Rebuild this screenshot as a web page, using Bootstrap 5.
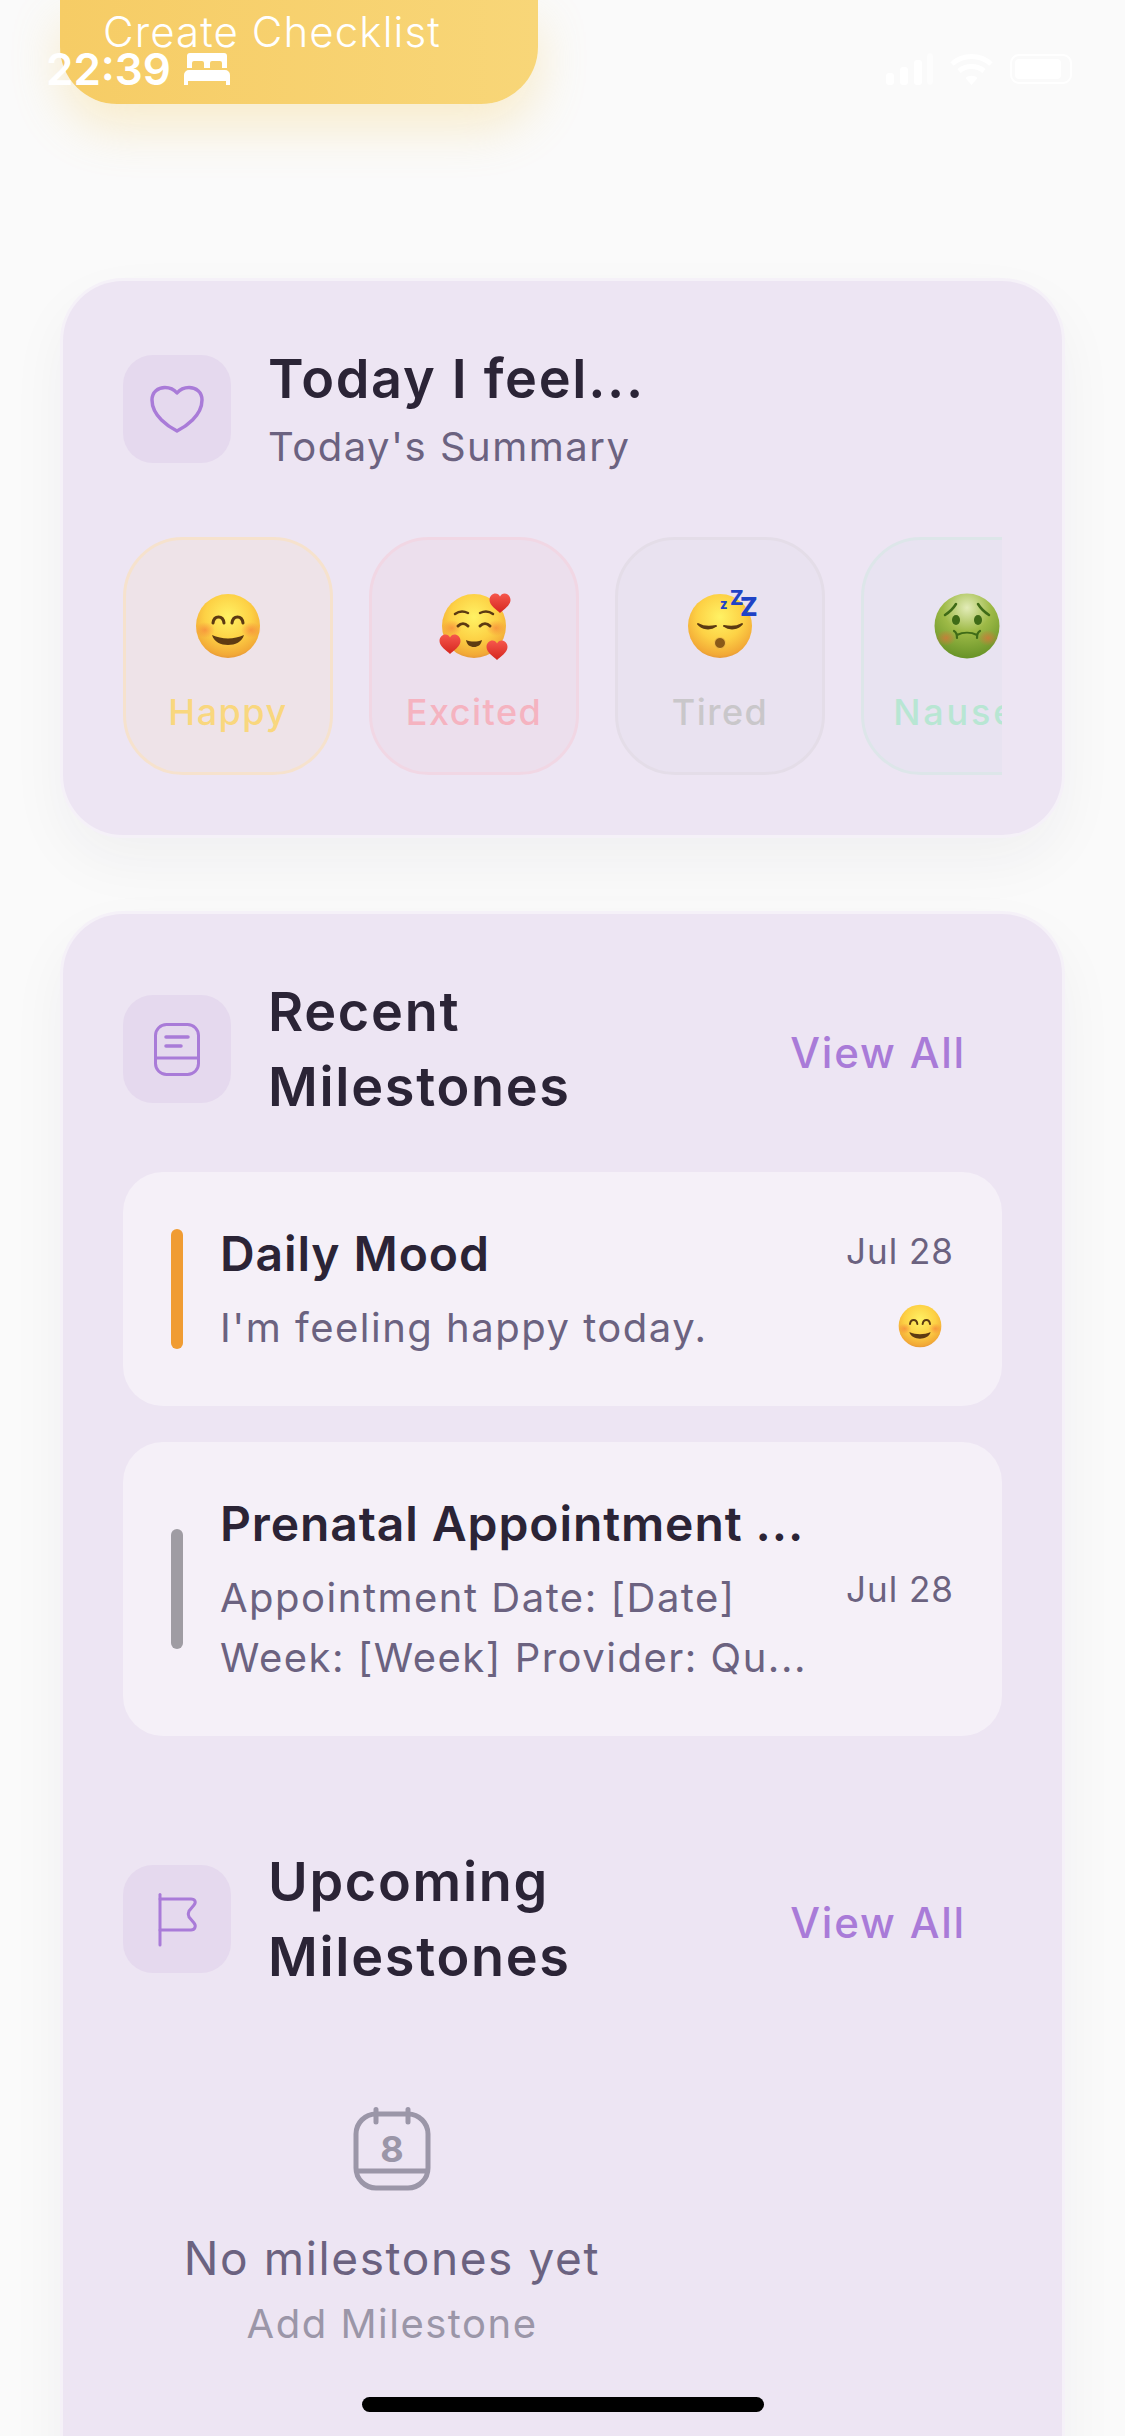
<!DOCTYPE html>
<html lang="en">
<head>
    <meta charset="UTF-8">
    <meta name="viewport" content="width=device-width, initial-scale=1.0">
    <title>Milestones</title>
    <link href="https://cdn.jsdelivr.net/npm/bootstrap@5.3.0/dist/css/bootstrap.min.css" rel="stylesheet">
    <script src="https://cdn.jsdelivr.net/npm/bootstrap@5.3.0/dist/js/bootstrap.bundle.min.js"></script>

    <style>
        body {
            width: 1125px;
            height: 2436px;
            overflow: hidden;
            position: relative;
            background: #fafafa;
            font-family: "Inter", "Liberation Sans", sans-serif;
            color: #2b2436;
        }

        /* Status bar and home bar sit over the page */
        .status-strip {
            position: absolute;
            top: 53px;
            left: 46px;
            right: 50px;
            height: 32px;
            color: #fff;
            z-index: 5;
        }
        .status-time {
            font-size: 44px;
            line-height: 32px;
            font-weight: 600;
        }
        .bed-icon {
            margin-left: 13px;
        }
        .home-line {
            position: absolute;
            left: 362px;
            top: 2397px;
            width: 402px;
            height: 15px;
            border-radius: 8px;
            background: #000;
            z-index: 5;
        }

        /* Yellow button scrolled under the status bar */
        .checklist-btn {
            width: 478px;
            height: 104px;
            margin-left: 60px;
            padding: 0 0 42px 43px;
            display: flex;
            align-items: center;
            border-radius: 0 0 57px 57px;
            background: linear-gradient(90deg, #f6cc65, #f8d678);
            box-shadow: 0 24px 48px rgba(246, 204, 101, .3);
            color: #fff;
            font-size: 42px;
            font-weight: 300;
            letter-spacing: 1.1px;
        }

        .page-wrap {
            padding: 177px 63px 0;
        }
        .lilac-panel {
            --bs-card-bg: #ede5f3;
            --bs-card-border-radius: 60px;
            --bs-card-inner-border-radius: 60px;
            border-width: 0;
            box-shadow: 0 0 0 3px #f5f1f8, 0 24px 60px rgba(40, 40, 50, .05);
            padding: 60px;
        }
        .lilac-panel + .lilac-panel {
            margin-top: 79px;
            padding-bottom: 200px;
        }
        .icon-tile {
            width: 108px;
            height: 108px;
            border-radius: 30px;
            background: #e5d9ee;
            margin-right: 37px;
        }
        .panel-title {
            margin: 0;
            font-size: 54px;
            line-height: 75px;
            font-weight: 600;
            letter-spacing: 1.7px;
            color: #2b2436;
        }
        .panel-sub {
            font-size: 40px;
            line-height: 61px;
            letter-spacing: 1.5px;
            color: #6b6280;
        }
        .title-wrap {
            max-width: 400px;
        }
        .view-all {
            margin-right: 36px;
            margin-top: 6px;
            font-size: 42px;
            font-weight: 500;
            letter-spacing: 1.8px;
            color: #a97bd8;
            text-decoration: none;
        }

        /* Mood tiles */
        .mood-row {
            margin-top: 60px;
            gap: 36px;
            overflow: hidden;
        }
        .mood-tile {
            flex: 0 0 210px;
            height: 238px;
            padding-top: 53px;
            border: 3px solid;
            border-radius: 60px;
        }
        .mood-label {
            margin-top: 29px;
            font-size: 36px;
            line-height: 48px;
            font-weight: 500;
            letter-spacing: 1.5px;
            white-space: nowrap;
        }
        .mood-happy { background: #eee3e8; border-color: #f6e2cd; color: #f9d77e; }
        .mood-excited { background: #ecdfed; border-color: #f1d7e4; color: #f5b3c0; }
        .mood-tired { background: #e9e2f0; border-color: #e4dde8; color: #c9c7ca; }
        .mood-nausea { flex-basis: 212px; background: #e8e3f1; border-color: #dde6e9; color: #b8e6d3; }
        .mood-nausea .mood-label { letter-spacing: 2.8px; }
        .face-pic {
            width: 66px;
            height: 66px;
            overflow: visible;
        }

        /* Milestone rows */
        .log-list {
            margin-top: 48px;
            gap: 36px;
        }
        .log-row {
            padding: 48px;
            border-radius: 40px;
            background: #f5f0f8;
        }
        .log-bar {
            width: 12px;
            height: 120px;
            margin-right: 37px;
            border-radius: 6px;
        }
        .log-text {
            flex: 1 1 0;
            min-width: 0;
            margin-right: 42px;
            white-space: nowrap;
        }
        .log-title {
            font-size: 48px;
            line-height: 68px;
            font-weight: 600;
            letter-spacing: .9px;
            margin-bottom: 10px;
        }
        .log-body {
            font-size: 40px;
            line-height: 60px;
            letter-spacing: 1.5px;
            color: #6b6280;
        }
        .log-date {
            font-size: 35px;
            line-height: 48px;
            letter-spacing: 1px;
            color: #6b6280;
            white-space: nowrap;
        }
        .log-face {
            width: 44px;
            height: 44px;
            margin: 29px 12px 4px 0;
        }
        .upcoming-head {
            margin-top: 108px;
        }

        /* Empty state */
        .empty-box {
            width: 538px;
            margin-top: 113px;
        }
        .empty-main {
            margin-top: 37px;
            font-size: 46px;
            line-height: 60px;
            letter-spacing: 1.6px;
            color: #6b6280;
        }
        .empty-add {
            margin-top: 8px;
            font-size: 40px;
            line-height: 56px;
            letter-spacing: 1.5px;
            color: #9b96a8;
        }
    </style>
</head>
<body>

    <div class="status-strip d-flex align-items-center">
        <span class="status-time">22:39</span>
        <svg class="bed-icon" width="46" height="32" viewBox="0 0 46 32" fill="#fff">
            <path d="M6 0h34a3 3 0 0 1 3 3v12h-5V10a2 2 0 0 0-2-2h-8a2 2 0 0 0-2 2v5h-6v-5a2 2 0 0 0-2-2h-8a2 2 0 0 0-2 2v5H3V3a3 3 0 0 1 3-3z"/>
            <path d="M5 17h36a5 5 0 0 1 5 5v10h-4v-4H4v4H0V22a5 5 0 0 1 5-5z"/>
        </svg>
        <div class="ms-auto d-flex align-items-center gap-3">
            <svg width="48" height="32" viewBox="0 0 48 32" fill="#fff">
                <rect x="1" y="20" width="8" height="12" rx="3"/>
                <rect x="15" y="14" width="8" height="18" rx="3"/>
                <rect x="29" y="7" width="8" height="25" rx="3"/>
                <rect x="42" y="0" width="6" height="32" rx="3" fill-opacity=".5"/>
            </svg>
            <svg width="45" height="32" viewBox="0 0 45 32" fill="none" stroke="#fff" stroke-width="5">
                <path d="M3 11c11-10 28-10 39 0M10 18c7-6 18-6 25 0"/>
                <path d="M22.500 32l-6-7c3-3 9-3 12 0z" fill="#fff" stroke="none"/>
            </svg>
            <svg width="65" height="32" viewBox="0 0 65 32" fill="#fff">
                <rect x="1" y="2" width="60" height="28" rx="8" fill="none" stroke="#fff" stroke-width="2"/>
                <rect x="5" y="6" width="46" height="20" rx="4"/>
            </svg>
        </div>
    </div>

    <div class="checklist-btn">Create Checklist</div>

    <div class="page-wrap">

        <section class="card lilac-panel">
            <div class="d-flex align-items-center">
                <div class="icon-tile d-flex align-items-center justify-content-center flex-shrink-0">
                    <svg width="60" height="60" viewBox="0 0 60 60" fill="none" stroke="#a97bd8" stroke-width="3.500" stroke-linejoin="round">
                        <path d="M30 52C22 48 5 37 5 21C5 13 11 8.500 18 8.500C23 8.500 27.500 11 30 14C32.500 11 37 8.500 42 8.500C49 8.500 55 13 55 21C55 37 38 48 30 52Z"/>
                    </svg>
                </div>
                <div>
                    <h2 class="panel-title">Today I feel...</h2>
                    <div class="panel-sub">Today's Summary</div>
                </div>
            </div>

            <div class="mood-row d-flex">
                <div class="mood-tile mood-happy d-flex flex-column align-items-center">
                    <svg class="face-pic" viewBox="0 0 66 66">
                        <defs>
                            <radialGradient id="faceYellow" cx=".5" cy=".36" r=".66">
                                <stop offset="0" stop-color="#fff264"/>
                                <stop offset=".55" stop-color="#fdd145"/>
                                <stop offset=".9" stop-color="#f2a936"/>
                                <stop offset="1" stop-color="#e1923a"/>
                            </radialGradient>
                            <radialGradient id="faceGreen" cx=".5" cy=".22" r=".82">
                                <stop offset="0" stop-color="#e3ecb8"/>
                                <stop offset=".45" stop-color="#9eba47"/>
                                <stop offset="1" stop-color="#628f24"/>
                            </radialGradient>
                            <radialGradient id="cheekOrange">
                                <stop offset="0" stop-color="#f5793a" stop-opacity=".6"/>
                                <stop offset="1" stop-color="#f5793a" stop-opacity="0"/>
                            </radialGradient>
                            <radialGradient id="cheekRed">
                                <stop offset="0" stop-color="#d9743a" stop-opacity=".75"/>
                                <stop offset="1" stop-color="#d9743a" stop-opacity="0"/>
                            </radialGradient>
                            <linearGradient id="heartRed" x1="0" y1="0" x2="0" y2="1">
                                <stop offset="0" stop-color="#f6574c"/>
                                <stop offset="1" stop-color="#d5261f"/>
                            </linearGradient>
                            <symbol id="happyFace" viewBox="0 0 66 66">
                                <circle cx="33" cy="33" r="32" fill="url(#faceYellow)"/>
                                <ellipse cx="10" cy="37" rx="10" ry="8" fill="url(#cheekOrange)"/>
                                <ellipse cx="56" cy="37" rx="10" ry="8" fill="url(#cheekOrange)"/>
                                <path d="M18 30c1-8 10-8 11 0M37 30c1-8 10-8 11 0" fill="none" stroke="#5c3a12" stroke-width="3" stroke-linecap="round"/>
                                <path d="M17 42c10 4.500 22 4.500 32 0c-2 7-9 10-16 10s-14-3-16-10z" fill="#5e3b12"/>
                            </symbol>
                            <path id="oneHeart" d="M0 9C-3 6-10.500 1.500-10.500-4C-10.500-8-7.500-10.500-4.500-10.500C-2.500-10.500-1-9.500 0-7.500C1-9.500 2.500-10.500 4.500-10.500C7.500-10.500 10.500-8 10.500-4C10.500 1.500 3 6 0 9Z" fill="url(#heartRed)"/>
                        </defs>
                        <use href="#happyFace" width="66" height="66"/>
                    </svg>
                    <div class="mood-label">Happy</div>
                </div>
                <div class="mood-tile mood-excited d-flex flex-column align-items-center">
                    <svg class="face-pic" viewBox="0 0 66 66">
                        <circle cx="33" cy="33" r="32" fill="url(#faceYellow)"/>
                        <ellipse cx="11" cy="35" rx="10" ry="8" fill="url(#cheekOrange)"/>
                        <ellipse cx="55" cy="35" rx="10" ry="8" fill="url(#cheekOrange)"/>
                        <path d="M14 21c4-3 9-3 13-1M39 20c4-2 9-2 13 1" fill="none" stroke="#5c3a12" stroke-width="2.500" stroke-linecap="round"/>
                        <path d="M17 33c3-3 7-3 10 0M39 33c3-3 7-3 10 0" fill="none" stroke="#5c3a12" stroke-width="3" stroke-linecap="round"/>
                        <path d="M25 47c5 2 11 2 16 0c-1 5-4 7-8 7s-7-2-8-7z" fill="#5e3b12"/>
                        <use href="#oneHeart" transform="translate(59 11)"/>
                        <use href="#oneHeart" transform="translate(9 52)"/>
                        <use href="#oneHeart" transform="translate(56 58)"/>
                    </svg>
                    <div class="mood-label">Excited</div>
                </div>
                <div class="mood-tile mood-tired d-flex flex-column align-items-center">
                    <svg class="face-pic" viewBox="0 0 66 66">
                        <circle cx="33" cy="33" r="32" fill="url(#faceYellow)"/>
                        <path d="M11 31c4 5 12 6 18 2c-5 1-13 1-18-2zM37 33c6 4 14 3 18-2c-5 3-13 3-18 2z" fill="#5c3a12" stroke="#5c3a12" stroke-width="2" stroke-linejoin="round"/>
                        <circle cx="33" cy="50" r="5.500" fill="#8a5a18" stroke="#f7c24d" stroke-width="1"/>
                        <g fill="#1f43c6" font-family="Inter, sans-serif" font-weight="800">
                            <text x="33" y="16" font-size="13">z</text>
                            <text x="43" y="12" font-size="20">Z</text>
                            <text x="53" y="23" font-size="26">Z</text>
                        </g>
                    </svg>
                    <div class="mood-label">Tired</div>
                </div>
                <div class="mood-tile mood-nausea d-flex flex-column align-items-center">
                    <svg class="face-pic" viewBox="0 0 66 66">
                        <circle cx="33" cy="33" r="32.500" fill="url(#faceGreen)"/>
                        <ellipse cx="12" cy="45" rx="10" ry="8" fill="url(#cheekRed)"/>
                        <ellipse cx="54" cy="45" rx="10" ry="8" fill="url(#cheekRed)"/>
                        <ellipse cx="22" cy="27" rx="4" ry="5" fill="#3f6b17"/>
                        <ellipse cx="44" cy="27" rx="4" ry="5" fill="#3f6b17"/>
                        <path d="M11 22c3-2 8-6 11-11M55 22c-3-2-8-6-11-11" fill="none" stroke="#3f6b17" stroke-width="2.500" stroke-linecap="round"/>
                        <path d="M20 38c2 1 3 3 3 7M46 38c-2 1-3 3-3 7M23 42c6-3 14-3 20 0" fill="none" stroke="#3f6b17" stroke-width="2.200" stroke-linecap="round"/>
                    </svg>
                    <div class="mood-label">Nausea</div>
                </div>
            </div>
        </section>

        <section class="card lilac-panel">
            <div class="d-flex align-items-center">
                <div class="icon-tile d-flex align-items-center justify-content-center flex-shrink-0">
                    <svg width="60" height="60" viewBox="0 0 60 60" fill="none" stroke="#a97bd8" stroke-width="3" stroke-linecap="round">
                        <rect x="8.500" y="5.500" width="43" height="50" rx="11"/>
                        <path d="M8.500 39H51.500"/>
                        <path d="M19 18H41M19 27H34" stroke-width="3.500"/>
                    </svg>
                </div>
                <h2 class="panel-title title-wrap">Recent Milestones</h2>
                <a href="#" class="view-all ms-auto">View All</a>
            </div>

            <div class="log-list d-flex flex-column">
                <div class="log-row d-flex align-items-center">
                    <div class="log-bar flex-shrink-0" style="background:#f09c33"></div>
                    <div class="log-text">
                        <div class="log-title">Daily Mood</div>
                        <div class="log-body">I'm feeling happy today.</div>
                    </div>
                    <div class="d-flex flex-column align-items-end flex-shrink-0">
                        <div class="log-date">Jul 28</div>
                        <svg class="log-face" viewBox="0 0 66 66"><use href="#happyFace" width="66" height="66"/></svg>
                    </div>
                </div>
                <div class="log-row d-flex align-items-center">
                    <div class="log-bar flex-shrink-0" style="background:#9f9ca3"></div>
                    <div class="log-text">
                        <div class="log-title">Prenatal Appointment ...</div>
                        <div class="log-body">Appointment Date: [Date]</div>
                        <div class="log-body">Week: [Week] Provider: Qu...</div>
                    </div>
                    <div class="d-flex flex-column align-items-end flex-shrink-0">
                        <div class="log-date">Jul 28</div>
                    </div>
                </div>
            </div>

            <div class="upcoming-head d-flex align-items-center">
                <div class="icon-tile d-flex align-items-center justify-content-center flex-shrink-0">
                    <svg width="60" height="60" viewBox="0 0 60 60" fill="none" stroke="#a97bd8" stroke-width="3" stroke-linecap="round" stroke-linejoin="round">
                        <path d="M13 5.500V56"/>
                        <path d="M13 10H44C48 10 49.500 13 47 16L42 22C41 24 41 26 42 28L47 34C49.500 37 48 41 44 41H13"/>
                    </svg>
                </div>
                <h2 class="panel-title title-wrap">Upcoming Milestones</h2>
                <a href="#" class="view-all ms-auto">View All</a>
            </div>

            <div class="empty-box d-flex flex-column align-items-center text-center">
                <svg width="78" height="84" viewBox="0 0 78 84" fill="none" stroke="#9b96a8" stroke-width="5" stroke-linecap="round">
                    <rect x="3" y="7" width="72" height="74" rx="20"/>
                    <path d="M23 2.500V15M55 2.500V15"/>
                    <path d="M3 64H75" stroke-linecap="butt"/>
                    <text x="39" y="55" text-anchor="middle" font-family="Inter, sans-serif" font-size="36" font-weight="700" fill="#9b96a8" stroke="none">8</text>
                </svg>
                <div class="empty-main">No milestones yet</div>
                <div class="empty-add">Add Milestone</div>
            </div>
        </section>

    </div>

    <div class="home-line"></div>

</body>
</html>
